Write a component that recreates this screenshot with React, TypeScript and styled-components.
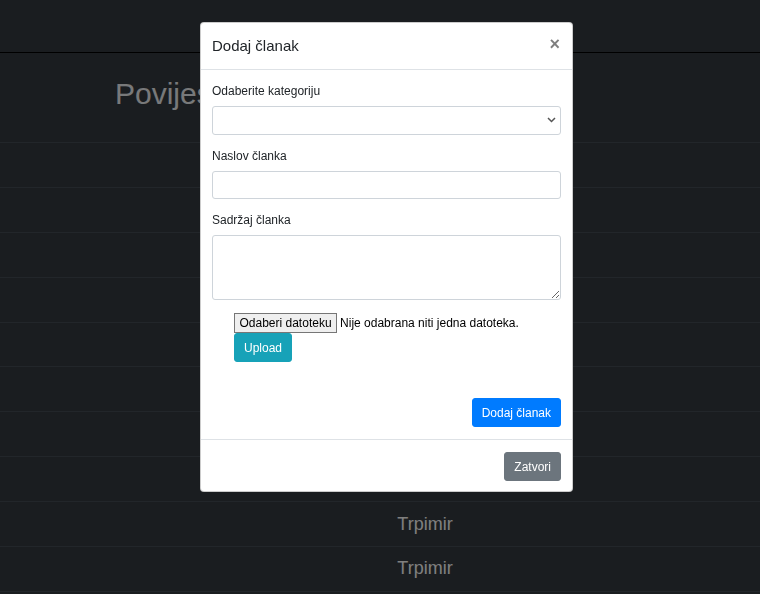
import React from "react";
import styled, { createGlobalStyle } from "styled-components";

const GlobalStyle = createGlobalStyle`
  html, body {
    margin: 0;
    padding: 0;
    overflow: hidden;
    background: #343a40;
    font-family: "Liberation Sans", Arial, sans-serif;
  }
  * { box-sizing: border-box; }
`;

const Page = styled.div`
  width: 760px;
  height: 594px;
  overflow: hidden;
  background: #343a40;
  color: #fff;
`;

const Navbar = styled.nav`
  height: 53px;
  border-bottom: 1px solid #000;
`;

const Heading = styled.h1`
  margin: 23px 0 30px 115px;
  font-size: 30px;
  font-weight: 500;
  line-height: 36px;
  color: #f0f2f4;
`;

const Table = styled.div`
  display: flex;
  flex-direction: column;
  border-bottom: 1px solid #454d55;
`;

const Row = styled.div`
  display: grid;
  grid-template-columns: 90px 1fr;
  align-items: center;
  height: 44.9px;
  flex: none;
  border-top: 1px solid #454d55;
`;

const Cell = styled.div`
  font-size: 18px;
  text-align: center;
  color: #fff;
`;

const Backdrop = styled.div`
  position: fixed;
  inset: 0;
  background: rgba(0, 0, 0, 0.5);
`;

const Overlay = styled.div`
  position: fixed;
  inset: 0;
  display: flex;
  align-items: flex-start;
  padding: 22px 0 0 200px;
`;

const Modal = styled.div`
  width: 373px;
  background: #fff;
  border: 1px solid rgba(0, 0, 0, 0.2);
  border-radius: 4px;
  color: #212529;
  display: flex;
  flex-direction: column;
`;

const Header = styled.div`
  display: flex;
  align-items: center;
  justify-content: space-between;
  padding: 12px 12px 12px 11px;
  border-bottom: 1px solid #dee2e6;
`;

const Title = styled.h5`
  margin: 0;
  font-size: 15px;
  font-weight: 400;
  line-height: 22px;
`;

const Close = styled.button`
  border: 0;
  background: transparent;
  padding: 0;
  margin: -5px 0 0 0;
  font-family: "Liberation Sans", Arial, sans-serif;
  font-size: 18px;
  font-weight: 700;
  line-height: 1;
  color: #000;
  opacity: 0.5;
  text-shadow: 0 1px 0 #fff;
  cursor: pointer;
`;

const Body = styled.div`
  padding: 12px 11px;
  display: flex;
  flex-direction: column;
`;

const Group = styled.div`
  margin-bottom: 12px;
  display: flex;
  flex-direction: column;
`;

const Label = styled.label`
  font-size: 12px;
  line-height: 18px;
  margin-bottom: 6px;
`;

const SelectWrap = styled.div`
  position: relative;
  height: 28.5px;
  border: 1px solid #ced4da;
  border-radius: 3px;
  background: #fff;
`;

const Chevron = styled.svg`
  position: absolute;
  right: 4px;
  top: 10px;
`;

const Input = styled.input`
  height: 28.5px;
  border: 1px solid #ced4da;
  border-radius: 3px;
  padding: 4.5px 9px;
  font: inherit;
  font-size: 12px;
  outline: none;
`;

const TextArea = styled.textarea`
  height: 65px;
  border: 1px solid #ced4da;
  border-radius: 3px;
  padding: 4.5px 9px;
  font: inherit;
  font-size: 12px;
  resize: vertical;
  outline: none;
`;

const UploadBlock = styled.div`
  margin-top: 1px;
  padding-left: 22px;
  display: flex;
  flex-direction: column;
  align-items: flex-start;
`;

const FileRow = styled.div`
  display: flex;
  align-items: center;
  gap: 3px;
  height: 20px;
  font-size: 12px;
  color: #000;
`;

const FileButton = styled.button`
  height: 20px;
  padding: 0 4.5px;
  border: 1px solid #767676;
  border-radius: 0;
  background: #efefef;
  color: #000;
  font-family: "Liberation Sans", Arial, sans-serif;
  font-size: 12px;
  line-height: 18px;
`;

const Btn = styled.button<{ $bg: string }>`
  height: 29px;
  padding: 0 9px;
  border: 1px solid ${(p) => p.$bg};
  border-radius: 3px;
  background: ${(p) => p.$bg};
  color: #fff;
  font-family: "Liberation Sans", Arial, sans-serif;
  font-size: 12px;
  line-height: 18px;
  cursor: pointer;
`;

const SubmitRow = styled.div`
  display: flex;
  justify-content: flex-end;
  margin-top: 36px;
`;

const Footer = styled.div`
  display: flex;
  justify-content: flex-end;
  padding: 12px 11px 10px;
  border-top: 1px solid #dee2e6;
`;

export default function App() {
  const rows = Array.from({ length: 10 });
  return (
    <>
      <GlobalStyle />
      <Page>
        <Navbar />
        <Heading>Povijest članaka</Heading>
        <Table>
          {rows.map((_, i) => (
            <Row key={i}>
              <Cell />
              <Cell>Trpimir</Cell>
            </Row>
          ))}
        </Table>
      </Page>
      <Backdrop />
      <Overlay>
        <Modal>
          <Header>
            <Title>Dodaj članak</Title>
            <Close aria-label="Close">×</Close>
          </Header>
          <Body>
            <Group>
              <Label>Odaberite kategoriju</Label>
              <SelectWrap>
                <Chevron width="9" height="6" viewBox="0 0 9 6">
                  <path d="M1 1 L4.5 4.5 L8 1" fill="none" stroke="#555" strokeWidth="1.5" />
                </Chevron>
              </SelectWrap>
            </Group>
            <Group>
              <Label>Naslov članka</Label>
              <Input type="text" />
            </Group>
            <Group>
              <Label>Sadržaj članka</Label>
              <TextArea rows={3} />
            </Group>
            <UploadBlock>
              <FileRow>
                <FileButton>Odaberi datoteku</FileButton>
                <span>Nije odabrana niti jedna datoteka.</span>
              </FileRow>
              <Btn $bg="#17a2b8">Upload</Btn>
            </UploadBlock>
            <SubmitRow>
              <Btn $bg="#007bff">Dodaj članak</Btn>
            </SubmitRow>
          </Body>
          <Footer>
            <Btn $bg="#6c757d">Zatvori</Btn>
          </Footer>
        </Modal>
      </Overlay>
    </>
  );
}
